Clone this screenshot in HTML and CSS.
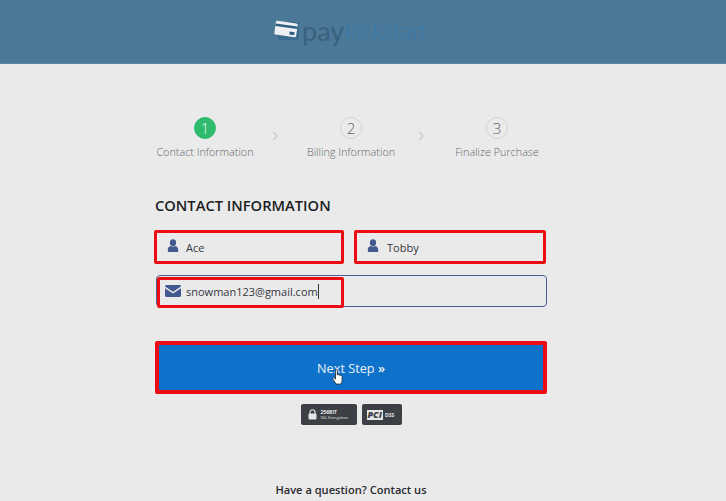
FILE: index.html
```html
<!DOCTYPE html>
<html lang="en">
<head>
<meta charset="utf-8">
<title>Checkout</title>
<link rel="stylesheet" href="styles.css">
</head>
<body>
<header class="top">
  <div class="logo">
    <svg class="logo-card" width="26" height="22" viewBox="0 0 26 22">
      <rect x="4" y="3" width="21" height="18" rx="2" fill="#3a6a8c"/>
      <g transform="rotate(8 12 10)">
        <rect x="1" y="3" width="22" height="14" rx="1.5" fill="#eef0f3"/>
        <rect x="1" y="6" width="22" height="2.4" fill="#2f5f80"/>
        <rect x="16" y="12" width="5" height="3" fill="#2f5f80"/>
      </g>
    </svg>
    <span class="logo-pay">pay</span><span class="logo-kick">kickstart</span>
  </div>
</header>
<main class="page">
  <ol class="steps">
    <li class="step">
      <span class="num num-active">1</span>
      <span class="step-label">Contact Information</span>
      <svg class="chev" width="6" height="10" viewBox="0 0 6 10"><path d="M1 1l4 4-4 4" fill="none" stroke="#cfcfd1" stroke-width="1.600"/></svg>
    </li>
    <li class="step">
      <span class="num">2</span>
      <span class="step-label">Billing Information</span>
      <svg class="chev" width="6" height="10" viewBox="0 0 6 10"><path d="M1 1l4 4-4 4" fill="none" stroke="#cfcfd1" stroke-width="1.600"/></svg>
    </li>
    <li class="step">
      <span class="num">3</span>
      <span class="step-label">Finalize Purchase</span>
    </li>
  </ol>
  <h2 class="title">CONTACT INFORMATION</h2>
  <div class="row">
    <div class="field field-red">
      <svg class="ico" width="12" height="14" viewBox="0 0 14 15" preserveAspectRatio="none"><circle cx="7" cy="4" r="3.6" fill="#42598f"/><path d="M1 14v-3.200C1 8.800 3 7.600 4.500 7.400 5.500 8.200 8.500 8.200 9.500 7.400 11 7.600 13 8.800 13 10.800V14z" fill="#42598f"/></svg>
      <span class="val">Ace</span>
    </div>
    <div class="field field-red field-right">
      <svg class="ico" width="12" height="14" viewBox="0 0 14 15" preserveAspectRatio="none"><circle cx="7" cy="4" r="3.6" fill="#42598f"/><path d="M1 14v-3.200C1 8.800 3 7.600 4.500 7.400 5.500 8.200 8.500 8.200 9.500 7.400 11 7.600 13 8.800 13 10.800V14z" fill="#42598f"/></svg>
      <span class="val val-last">Tobby</span>
    </div>
  </div>
  <div class="email">
    <svg class="ico-mail" width="16" height="12" viewBox="0 0 16 12"><path d="M0 1.500C0 .7.700 0 1.500 0h13c.8 0 1.500.7 1.500 1.500L8 6.800z" fill="#42598f"/><path d="M0 3.300 8 8.600l8-5.300v7.200c0 .8-.7 1.500-1.500 1.500h-13C.7 12 0 11.300 0 10.500z" fill="#42598f"/></svg>
    <span class="val val-mail">snowman123@gmail.com</span><span class="caret"></span>
    <span class="mark"></span>
  </div>
  <button class="next" type="button">Next Step <span class="dbl">»</span>
    <svg class="hand" width="12" height="16" viewBox="0 0 12 16"><path d="M3.500 1.300c0-1 1.800-1 1.800 0V6l.6-.3c.6-.2 1.200 0 1.300.4.600-.3 1.300-.1 1.400.4.700-.2 1.400.1 1.500.8v3.800c0 1.800-.9 3.200-1.600 4H4.300C3.500 13.800 1.200 11 .8 9.800c-.4-1 .6-1.700 1.400-1l1.300 1.400z" fill="#fff" stroke="#222" stroke-width=".8"/></svg>
  </button>
  <div class="badges">
    <div class="badge badge-ssl">
      <svg width="9" height="11" viewBox="0 0 9 11"><path d="M2 5V3.200a2.500 2.500 0 0 1 5 0V5" fill="none" stroke="#e6e7e8" stroke-width="1.100"/><rect x=".5" y="4.600" width="8" height="6" rx="1" fill="#e6e7e8"/></svg>
      <span class="ssl-text"><b class="ssl-big">256BIT</b><span class="ssl-small">SSL Encryption</span></span>
    </div>
    <div class="badge badge-pci">
      <span class="pci">PCI</span><span class="dss">DSS</span>
    </div>
  </div>
</main>
<footer class="foot">Have a question? Contact us</footer>
</body>
</html>
```
FILE: styles.css
```css
* { box-sizing: border-box; }
html, body { margin: 0; height: 100%; }
body {
  background: #eaeaeb;
  font-family: "Open Sans", "Noto Sans", sans-serif;
  color: #333;
  height: 501px;
  overflow: hidden;
}
.top {
  height: 64px;
  background: #4c7897;
  border-bottom: 1px solid #5d84a0;
  display: flex;
  justify-content: flex-start;
  padding: 16px 0 0 274px;
}
.logo { display: flex; align-items: center; height: 28px; font-family: "Lato", sans-serif; font-size: 27px; }
.logo-card { margin-right: 2px; flex: none; }
.logo-pay { color: #38627f; }
.logo-kick { color: #3f78a3; font-size: 22.500px; margin-left: 1px; letter-spacing: -.2px; }
.page { width: 392px; margin: 0 0 0 155px; }
.steps {
  list-style: none; margin: 53px 0 0 -23px; padding: 0;
  display: grid; grid-template-columns: repeat(3, 146px);
  height: 44px;
}
.step { position: relative; display: flex; flex-direction: column; align-items: center; }
.num {
  width: 22px; height: 22px; border-radius: 50%;
  border: 1px solid #d5d5d7;
  font-size: 15px; line-height: 20px; text-align: center; color: #666;
  font-weight: 300;
}
.num-active { background: #2fbb6e; border-color: #2fbb6e; color: #eafaf0; }
.step-label { font-size: 10.800px; font-weight: 300; color: #666; margin-top: 5px; line-height: 15px; white-space: nowrap; }
.chev { position: absolute; left: 140px; top: 14px; }
.title {
  font-size: 14.700px; font-weight: 600; color: #1c1c1f; margin: 34px 0 0; line-height: 20px;
}
.row { display: flex; gap: 11px; margin-top: 15px; }
.field { height: 34px; display: flex; align-items: center; padding-left: 10px; }
.field-red { width: 190px; border: 3px solid #ee0c14; border-radius: 2px; margin-left: -1px; }
.field-right { width: 192px; }
.ico { flex: none; margin-top: -2px; }
.val { font-size: 11px; color: #33363d; margin-left: 7px; }
.val-last { margin-left: 8px; }
.email {
  position: relative; display: flex; align-items: center;
  width: 391px; height: 32px; margin: 11px 0 0 1px;
  border: 1px solid #4a5f92; border-radius: 4px;
  padding-left: 8px;
}
.ico-mail { flex: none; }
.val-mail { margin-left: 5px; }
.caret { width: 1px; height: 15px; background: #333; }
.mark {
  position: absolute; left: 0; top: 1px; width: 187px; height: 31px;
  border: 3px solid #ee0c14; border-radius: 2px;
}
.next {
  position: relative; display: block; width: 392px; height: 53px; margin-top: 34px;
  background: #0f72ca; border: 4px solid #ee0c14; border-radius: 2px;
  color: #e8f1fa; font-family: inherit; font-size: 12.700px; text-align: center; padding: 0;
}
.dbl { font-weight: 600; }
.hand { position: absolute; left: 173px; top: 24px; }
.badges { display: flex; justify-content: center; gap: 5px; margin-top: 10px; }
.badge { height: 21px; background: #3c4044; border-radius: 2px; display: flex; align-items: center; color: #e6e7e8; }
.badge-ssl { width: 56px; padding-left: 7px; gap: 4px; }
.ssl-text { display: flex; flex-direction: column; line-height: 6px; }
.ssl-big { font-size: 5px; font-weight: 700; }
.ssl-small { font-size: 4px; }
.badge-pci { width: 40px; padding-left: 5px; }
.pci { font-size: 9px; font-weight: 800; font-style: italic; background: #e6e7e8; color: #3c4044; line-height: 10px; padding: 0 1px; }
.dss { font-size: 5px; font-weight: 700; margin-left: 2px; }
.foot {
  position: absolute; left: 0; width: 702px; top: 459px; height: 42px;
  border-top: 1px solid #e6e6e7;
  text-align: center; font-size: 11.100px; font-weight: 600; color: #2b2b30; line-height: 16px; padding-top: 22px;
}
```
